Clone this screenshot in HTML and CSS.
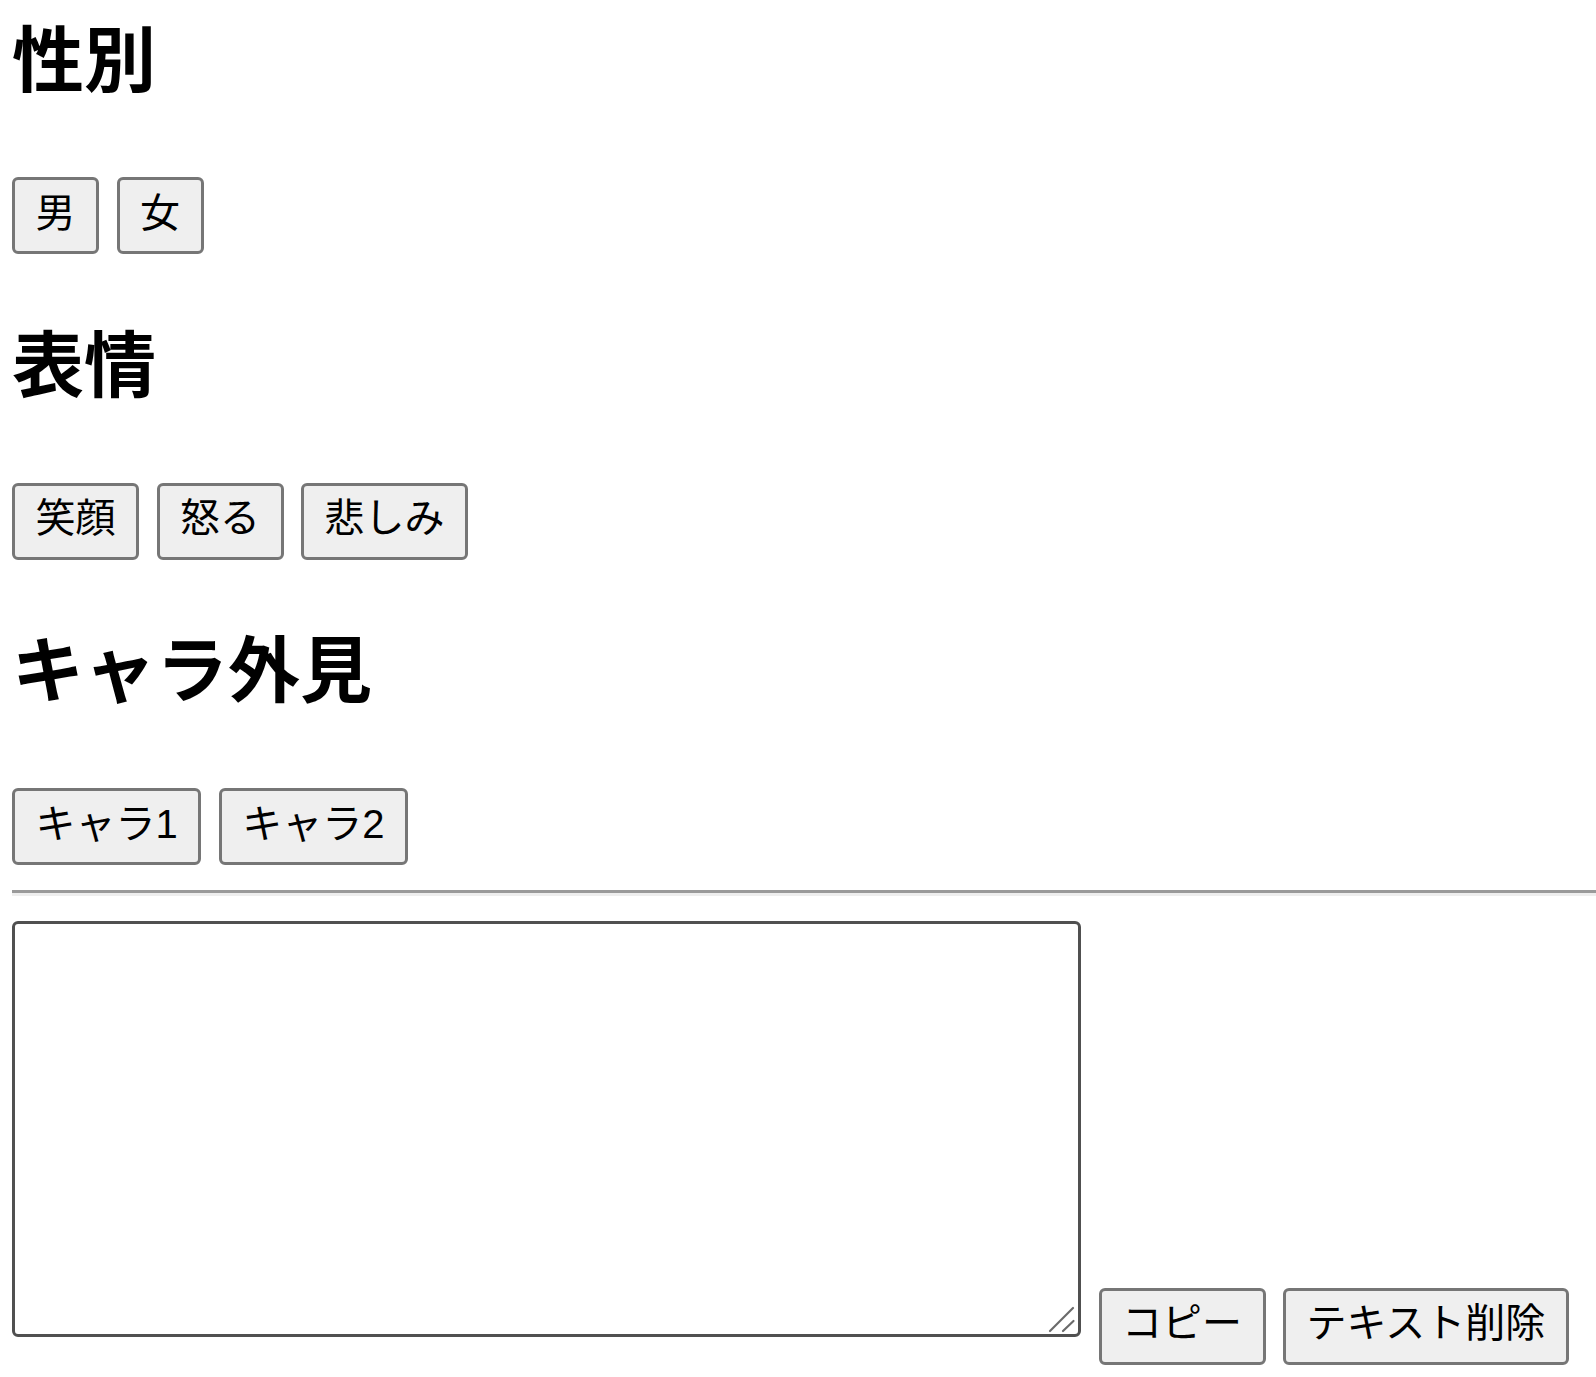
FILE: index.html
```html
<!DOCTYPE html>
<html lang="ja">
<head>
<meta charset="utf-8">
<title>キャラ設定</title>
<link rel="stylesheet" href="styles.css">
</head>
<body>
  <section class="section">
    <h1 class="section-title">性別</h1>
    <div class="choices">
      <button class="btn">男</button>
      <button class="btn">女</button>
    </div>
  </section>
  <section class="section">
    <h1 class="section-title">表情</h1>
    <div class="choices">
      <button class="btn">笑顔</button>
      <button class="btn">怒る</button>
      <button class="btn">悲しみ</button>
    </div>
  </section>
  <section class="section">
    <h1 class="section-title">キャラ外見</h1>
    <div class="choices">
      <button class="btn">キャラ1</button>
      <button class="btn">キャラ2</button>
    </div>
  </section>
  <hr class="divider">
  <div class="output-row">
    <div class="textarea-wrap">
      <textarea class="output"></textarea>
      <svg class="grip" width="30" height="30" viewBox="0 0 30 30" aria-hidden="true">
        <line x1="3" y1="27" x2="26" y2="4" stroke="#6a6a6a" stroke-width="2.2" stroke-linecap="round"/>
        <line x1="16" y1="27" x2="26.5" y2="17" stroke="#6a6a6a" stroke-width="2.2" stroke-linecap="round"/>
      </svg>
    </div>
    <button class="btn btn-bottom">コピー</button>
    <button class="btn btn-bottom">テキスト削除</button>
  </div>
</body>
</html>
```

FILE: styles.css
```css
html, body {
  background: #ffffff;
}

body {
  margin: 0;
  padding: 18.5px 0 0 12px;
  font-family: "Liberation Sans", "Noto Sans CJK JP", sans-serif;
  color: #000000;
}

.section + .section {
  margin-top: 69.7px;
}

.section-title {
  margin: 0 0 86.8px;
  font-size: 72px;
  line-height: 72px;
  font-weight: 700;
  font-family: "Noto Sans CJK JP", sans-serif;
}

.choices {
  display: flex;
  gap: 17.5px;
}

.btn {
  box-sizing: border-box;
  height: 77px;
  padding: 0 20.5px 6px;
  border: 3px solid #767676;
  border-radius: 6px;
  background: #efefef;
  color: #000000;
  font-family: "Liberation Sans", "Noto Sans CJK JP", sans-serif;
  font-size: 40px;
  line-height: 58px;
  font-weight: 400;
  white-space: nowrap;
}

.divider {
  margin: 24.7px 0;
  height: 0;
  border: none;
  border-top: 3px solid #9a9a9a;
  border-bottom: 3px solid #eeeeee;
}

.output-row {
  display: flex;
  align-items: flex-start;
  gap: 17.5px;
}

.textarea-wrap {
  position: relative;
  width: 1069px;
  height: 416px;
  flex: none;
}

.output {
  display: block;
  box-sizing: border-box;
  width: 100%;
  height: 100%;
  margin: 0;
  border: 3px solid #505050;
  border-radius: 6px;
  background: #ffffff;
  resize: none;
  font-size: 20px;
}

.grip {
  position: absolute;
  right: 4px;
  bottom: 3px;
}

.btn-bottom {
  margin-top: 367px;
}
```
